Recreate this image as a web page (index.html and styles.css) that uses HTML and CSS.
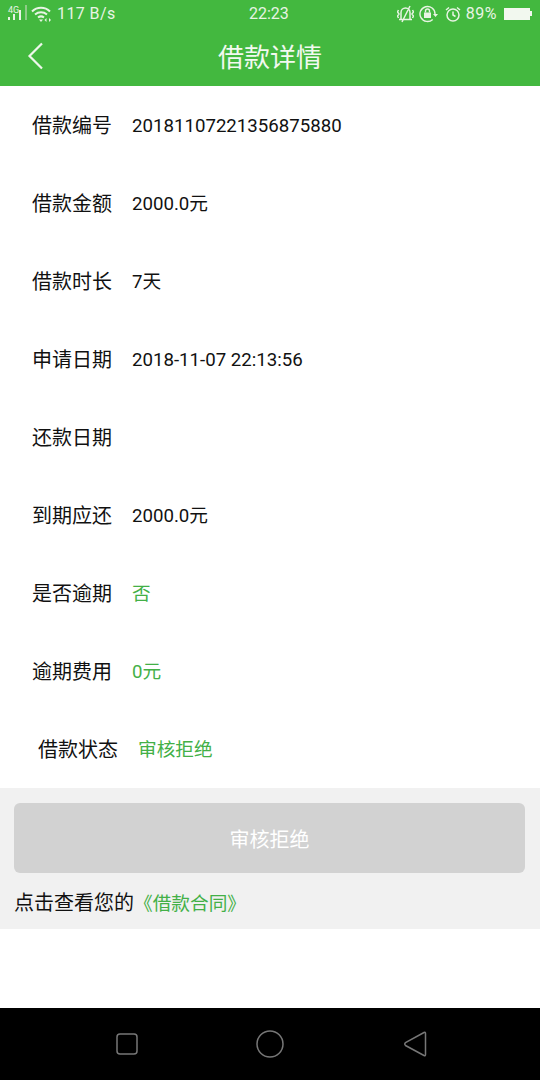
FILE: index.html
```html
<!DOCTYPE html>
<html lang="zh">
<head>
  <meta charset="utf-8">
  <title>借款详情</title>
  <link rel="stylesheet" href="styles.css">
</head>
<body>
  <div class="page">
    <div class="header">
      <div class="status-bar">
        <div class="status-left">
          <svg class="signal" width="22" height="20" viewBox="0 0 22 20">
            <text x="2" y="8.500" class="net-label">4G</text>
            <rect x="2" y="13" width="2" height="3" fill="#e8f4e4"/>
            <rect x="7" y="10" width="2" height="6" fill="#e8f4e4"/>
            <rect x="13" y="6" width="2" height="10" fill="#e8f4e4"/>
            <rect x="19" y="1" width="2" height="15" fill="#8fcc88"/>
          </svg>
          <svg class="wifi" width="22" height="18" viewBox="0 0 22 18" fill="none" stroke="#e8f4e4" stroke-width="2">
            <path d="M1 6.500c5-5 13-5 18 0"/>
            <path d="M4 9.500c3.500-3 8.500-3 12 0"/>
            <path d="M7 12.500c2-1.500 4-1.500 6 0"/>
            <path d="M8 14.500h4l-2 2.500z" fill="#e8f4e4" stroke="none"/>
            <path d="M15.500 13l-2 2 2 2zM18 13l2 2-2 2z" fill="#e8f4e4" stroke="none"/>
          </svg>
          <span class="speed">117 B/s</span>
        </div>
        <span class="clock">22:23</span>
        <div class="status-right">
          <svg class="icon-bell" width="17" height="18" viewBox="0 0 17 18" fill="none" stroke="#e8f4e4" stroke-width="1.500">
            <path d="M4 14.500V7.500a4.500 4.500 0 0 1 9 0v7zM2 14.500h13M1.500 5L.5 7 2 9 .5 11l1 2M15.500 5l1 2L15 9l1.500 2-1 2M13 1L5 17"/>
          </svg>
          <svg class="icon-lock" width="19" height="18" viewBox="0 0 19 18" fill="none" stroke="#e8f4e4" stroke-width="1.400">
            <path d="M16 9a7.500 7.500 0 1 0-2.300 5.400"/>
            <path d="M14 9h5l-2.500 3z" fill="#e8f4e4" stroke="none"/>
            <rect x="5" y="7.500" width="7" height="5.500" fill="#e8f4e4" stroke="none"/>
            <path d="M6.500 7.500V6a2 2 0 0 1 4 0v1.500"/>
          </svg>
          <svg class="icon-alarm" width="16" height="18" viewBox="0 0 16 18" fill="none" stroke="#e8f4e4" stroke-width="1.500">
            <circle cx="8" cy="10" r="6"/>
            <path d="M8 6.500V10l2.500 1.500M1 5L4 2.500M15 5L12 2.500"/>
          </svg>
          <span class="battery-text">89%</span>
          <div class="battery"></div>
          <div class="battery-tip"></div>
        </div>
      </div>
      <div class="title-bar">
        <svg class="back" width="18" height="28" viewBox="0 0 18 28" fill="none" stroke="#eef7eb" stroke-width="2.200">
          <path d="M15 1.500L2.500 14 15 26.500"/>
        </svg>
        <h1>借款详情</h1>
      </div>
    </div>

    <div class="details">
      <div class="row"><span class="label">借款编号</span><span class="value">20181107221356875880</span></div>
      <div class="row"><span class="label">借款金额</span><span class="value">2000.0元</span></div>
      <div class="row"><span class="label">借款时长</span><span class="value">7天</span></div>
      <div class="row"><span class="label">申请日期</span><span class="value">2018-11-07 22:13:56</span></div>
      <div class="row"><span class="label">还款日期</span><span class="value"></span></div>
      <div class="row"><span class="label">到期应还</span><span class="value">2000.0元</span></div>
      <div class="row"><span class="label">是否逾期</span><span class="value green">否</span></div>
      <div class="row"><span class="label">逾期费用</span><span class="value green">0元</span></div>
      <div class="row row-status"><span class="label">借款状态</span><span class="value green">审核拒绝</span></div>
    </div>

    <div class="footer">
      <button class="submit">审核拒绝</button>
      <div class="contract">点击查看您的<span class="contract-link">《借款合同》</span></div>
    </div>

    <div class="spacer"></div>

    <div class="nav-bar">
      <svg width="24" height="24" viewBox="0 0 24 24" fill="none" stroke="#777" stroke-width="1.500"><rect x="2" y="2" width="20" height="20" rx="3"/></svg>
      <svg class="nav-home" width="28" height="28" viewBox="0 0 28 28" fill="none" stroke="#777" stroke-width="1.500"><circle cx="14" cy="14" r="13"/></svg>
      <svg width="24" height="28" viewBox="0 0 24 28" fill="none" stroke="#777" stroke-width="1.500"><path d="M21 2.500c1-.5 1.500 0 1.500 1v21c0 1-.5 1.500-1.500 1L2.500 15.500c-1-.8-1-2 0-2.800z"/></svg>
    </div>
  </div>
</body>
</html>
```

FILE: styles.css
```css
body {
  margin: 0;
  font-family: Roboto, "Noto Sans CJK SC", sans-serif;
  background-color: #ffffff;
}

.page {
  width: 540px;
  height: 1080px;
  display: flex;
  flex-direction: column;
  overflow: hidden;
}

.header {
  background-color: #43b83f;
  height: 86px;
  flex-shrink: 0;
}

.status-bar {
  height: 27px;
  position: relative;
  display: flex;
  align-items: center;
  justify-content: space-between;
  padding: 0 8px 0 6px;
  color: #e8f4e4;
  font-size: 16px;
}

.status-left, .status-right {
  display: flex;
  align-items: center;
}

.net-label {
  font-size: 9px;
  fill: #e8f4e4;
}

.wifi {
  margin-left: 3px;
}

.speed {
  margin-left: 4px;
  letter-spacing: 0.4px;
}

.clock {
  position: absolute;
  left: 249px;
}

.icon-bell {
  margin-right: 5px;
}

.icon-lock {
  margin-right: 7px;
}

.icon-alarm {
  margin-right: 5px;
}

.battery-text {
  margin-right: 7px;
  letter-spacing: 0.5px;
}

.battery {
  width: 26px;
  height: 12px;
  background-color: #f2f8ef;
}

.battery-tip {
  width: 2px;
  height: 5px;
  background-color: #f2f8ef;
}

.title-bar {
  height: 59px;
  box-sizing: border-box;
  padding-bottom: 3px;
  position: relative;
  display: flex;
  align-items: center;
  justify-content: center;
}

.back {
  position: absolute;
  left: 27px;
  top: 15px;
}

h1 {
  margin: 0;
  font-size: 26px;
  font-weight: normal;
  color: #f2f9f0;
}

.details {
  height: 702px;
  flex-shrink: 0;
  padding-top: 1px;
  box-sizing: border-box;
}

.row {
  height: 78px;
  display: flex;
  align-items: center;
  padding-left: 32px;
  color: #111111;
}

.row-status {
  padding-left: 38px;
}

.label {
  width: 100px;
  flex-shrink: 0;
  font-size: 20px;
  line-height: 28px;
}

.value {
  font-size: 18.67px;
  line-height: 26px;
  white-space: nowrap;
}

.green {
  color: #43b047;
}

.footer {
  background-color: #f1f1f1;
  height: 141px;
  flex-shrink: 0;
  padding: 15px 15px 0 14px;
  box-sizing: border-box;
}

.submit {
  display: block;
  width: 100%;
  height: 70px;
  border: none;
  border-radius: 6px;
  background-color: #d2d2d2;
  color: #ffffff;
  font-family: inherit;
  font-size: 20px;
}

.contract {
  margin-top: 16px;
  font-size: 20px;
  line-height: 28px;
  color: #111111;
}

.contract-link {
  font-size: 18.67px;
  color: #43b047;
}

.spacer {
  flex: 1;
}

.nav-bar {
  height: 72px;
  flex-shrink: 0;
  background-color: #000000;
  display: grid;
  grid-template-columns: 24px 28px 24px;
  justify-content: space-between;
  align-items: center;
  padding: 0 113px 0 115px;
}

.nav-home {
  margin-left: -1px;
}
```
